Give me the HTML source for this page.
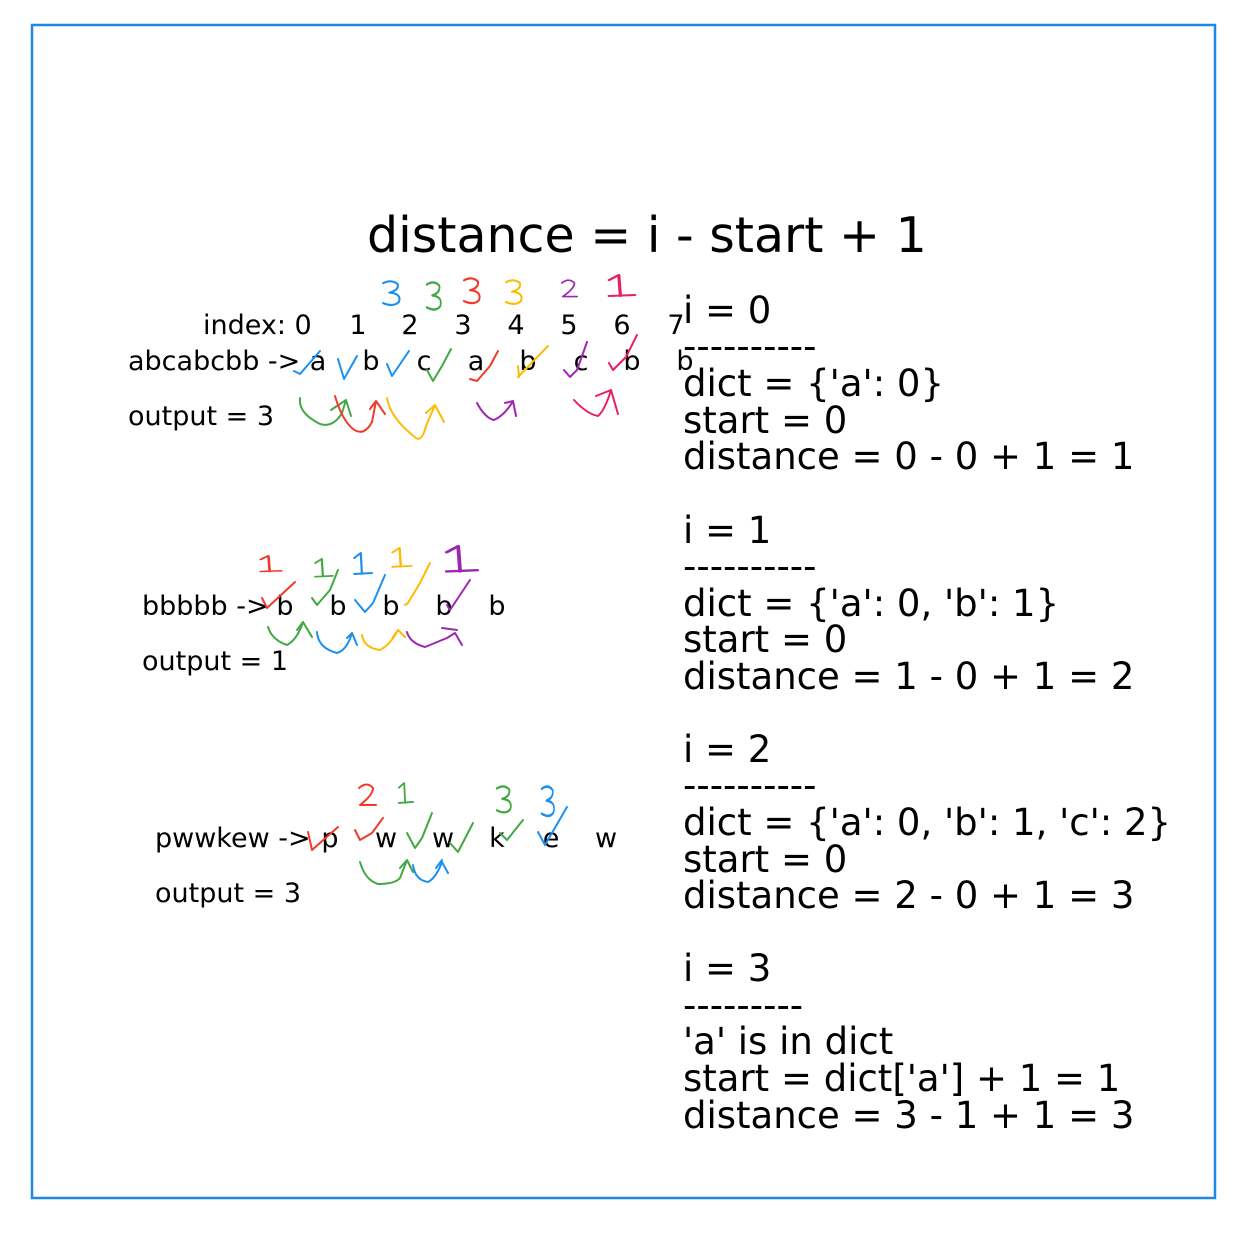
<!DOCTYPE html>
<html><head><meta charset="utf-8"><style>
html,body{margin:0;padding:0;background:#fff;}
svg{display:block;}
text{font-family:"DejaVu Sans","Liberation Sans",sans-serif;fill:#000;}
.s{font-size:27px;}
.r{font-size:37px;}
path{fill:none;stroke-width:2;stroke-linecap:round;stroke-linejoin:round;}
.B{stroke:#1a90f0}.G{stroke:#43a843}.R{stroke:#f03a2a}.Y{stroke:#fbbc05}.P{stroke:#9c27b0}.K{stroke:#e91e63}
</style></head><body>
<svg width="1238" height="1236" viewBox="0 0 1238 1236" xmlns="http://www.w3.org/2000/svg">
<defs>
<path id="d3" d="M2,3 Q10,-1 16,4 Q17,10 8,12 Q20,13 17,21 Q12,26 2,22"/>
<path id="d2" d="M2,5 Q10,-2 16,5 Q16,12 3,22 L19,22"/>
<path id="d1" d="M2,6 L8,1 L9,22 M2,22 L18,21"/>
</defs>
<rect x="32" y="25" width="1183" height="1173" fill="none" stroke="#1e88e5" stroke-width="2.5"/>
<text x="367" y="252" style="font-size:49px">distance = i - start + 1</text>

<g class="r">
<text x="683" y="323">i = 0</text>
<text x="683" y="359">----------</text>
<text x="683" y="396">dict = {'a': 0}</text>
<text x="683" y="433">start = 0</text>
<text x="683" y="469">distance = 0 - 0 + 1 = 1</text>
<text x="683" y="543">i = 1</text>
<text x="683" y="579">----------</text>
<text x="683" y="616">dict = {'a': 0, 'b': 1}</text>
<text x="683" y="652">start = 0</text>
<text x="683" y="689">distance = 1 - 0 + 1 = 2</text>
<text x="683" y="762">i = 2</text>
<text x="683" y="798">----------</text>
<text x="683" y="835">dict = {'a': 0, 'b': 1, 'c': 2}</text>
<text x="683" y="872">start = 0</text>
<text x="683" y="908">distance = 2 - 0 + 1 = 3</text>
<text x="683" y="981">i = 3</text>
<text x="683" y="1018">---------</text>
<text x="683" y="1054">'a' is in dict</text>
<text x="683" y="1091">start = dict['a'] + 1 = 1</text>
<text x="683" y="1128">distance = 3 - 1 + 1 = 3</text>
</g>

<g class="s" text-anchor="middle">
<text x="358" y="334">1</text><text x="410" y="334">2</text><text x="463" y="334">3</text><text x="516" y="334">4</text><text x="569" y="334">5</text><text x="622" y="334">6</text><text x="676" y="334">7</text>
<text x="318" y="370">a</text><text x="371" y="370">b</text><text x="424" y="370">c</text><text x="476" y="370">a</text><text x="528" y="370">b</text><text x="581" y="370">c</text><text x="632" y="370">b</text><text x="685" y="370">b</text>
<text x="285" y="615">b</text><text x="338" y="615">b</text><text x="391" y="615">b</text><text x="444" y="615">b</text><text x="497" y="615">b</text>
<text x="330" y="847">p</text><text x="386" y="847">w</text><text x="443" y="847">w</text><text x="497" y="847">k</text><text x="551" y="847">e</text><text x="606" y="847">w</text>
</g>
<g class="s">
<text x="203" y="334">index: 0</text>
<text x="128" y="370">abcabcbb -&gt;</text>
<text x="128" y="425">output = 3</text>
<text x="142" y="615">bbbbb -&gt;</text>
<text x="142" y="670">output = 1</text>
<text x="155" y="847">pwwkew -&gt;</text>
<text x="155" y="902">output = 3</text>
</g>

<use href="#d3" class="B" transform="translate(381,280) scale(1.05,1.05)"/>
<use href="#d3" class="G" transform="translate(425,281) scale(0.9,1.2)"/>
<use href="#d3" class="R" transform="translate(462,277) scale(1,1.1)"/>
<use href="#d3" class="Y" transform="translate(504,279) scale(1,1.05)"/>
<use href="#d2" class="P" transform="translate(560,279) scale(0.9,0.8)"/>
<use href="#d1" class="K" transform="translate(606,274) scale(1.6,1)"/>
<path class="B" d="M294,371 L300,374 L320,351"/>
<path class="B" d="M338,359 L344,379 L357,356"/>
<path class="B" d="M387,364 L392,376 L409,351"/>
<path class="G" d="M427,370 L433,381 L442,366 L451,349"/>
<path class="R" d="M470,379 L477,381 L490,366 L498,351"/>
<path class="Y" d="M518,377 L548,346 M518,366 L519,377"/>
<path class="P" d="M564,370 L570,377 L577,370 L587,342"/>
<path class="K" d="M609,363 L613,370 L626,357 L637,335"/>
<path class="G" d="M300,398 Q298,413 320,424 Q333,428 342,413 L346,400 L351,416 M331,410 L346,400"/>
<path class="R" d="M335,396 Q342,420 353,429 Q364,437 372,422 L376,401 L385,414 M370,409 L376,401"/>
<path class="Y" d="M387,398 Q390,418 416,438 Q422,442 426,426 L435,405 L444,422 M426,413 L435,405"/>
<path class="P" d="M477,403 Q485,418 494,420 Q505,415 513,401 L516,416 M505,403 L513,401"/>
<path class="K" d="M574,400 Q587,414 598,416 Q605,410 611,390 L618,414 M596,396 L611,390"/>

<use href="#d1" class="R" transform="translate(258,555) scale(1.3,0.75)"/>
<use href="#d1" class="G" transform="translate(313,558) scale(1.1,0.85)"/>
<use href="#d1" class="B" transform="translate(352,552) scale(1.1,1)"/>
<use href="#d1" class="Y" transform="translate(390,547) scale(1.2,0.9)"/>
<use href="#d1" class="P" transform="translate(443,545) scale(1.9,1.2)"/>
<path class="R" d="M262,598 L267,608 L295,582"/>
<path class="G" d="M312,598 L317,605 L330,590 L338,570"/>
<path class="B" d="M355,600 L365,612 L373,603 L385,575"/>
<path class="Y" d="M405,605 L408,603 L420,583 L430,563"/>
<path class="P" d="M447,605 L450,610 L470,580"/>
<path class="G" d="M268,627 Q272,640 287,645 Q297,640 303,622 L312,637 M297,630 L303,622"/>
<path class="B" d="M317,632 Q318,648 337,653 Q347,650 352,633 L357,645 M347,638 L352,633"/>
<path class="Y" d="M362,635 Q364,648 380,650 Q390,645 398,630 L405,637 M393,637 L398,630"/>
<path class="P" d="M407,632 Q410,643 425,647 L447,638 L455,633 L462,645 M442,628 L457,630"/>

<use href="#d2" class="R" transform="translate(357,783)"/>
<use href="#d1" class="G" transform="translate(397,782) scale(0.9,0.95)"/>
<use href="#d3" class="G" transform="translate(495,785) scale(0.9,1.15)"/>
<use href="#d3" class="B" transform="translate(540,785) scale(0.8,1.3)"/>
<path class="R" d="M308,832 L312,850 L338,827"/>
<path class="R" d="M355,830 L360,840 L372,833 L383,818"/>
<path class="G" d="M407,833 L415,848 L422,838 L432,813"/>
<path class="G" d="M450,843 L458,852 L473,823"/>
<path class="G" d="M500,833 L507,840 L523,820"/>
<path class="B" d="M538,832 L545,845 L567,807"/>
<path class="G" d="M360,862 Q365,880 378,884 Q395,884 400,878 L407,860 L413,872 M400,868 L407,860"/>
<path class="B" d="M413,865 Q415,880 428,882 Q436,878 442,862 L448,873 M436,868 L442,860"/>
</svg>
</body></html>
